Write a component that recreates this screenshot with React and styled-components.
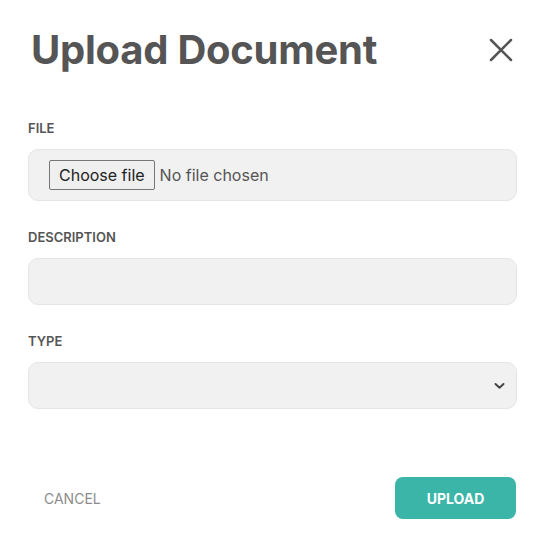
import React, { useState } from 'react';
import styled, { createGlobalStyle } from 'styled-components';

const GlobalStyle = createGlobalStyle`
  html, body {
    margin: 0;
    padding: 0;
    background: #ffffff;
  }
  body {
    font-family: Inter, "Noto Sans", sans-serif;
  }
`;

const Modal = styled.div`
  width: 543px;
  height: 542px;
  box-sizing: border-box;
  padding: 23px 26px 0 28px;
  display: flex;
  flex-direction: column;
`;

const Header = styled.div`
  display: flex;
  align-items: center;
  justify-content: space-between;
  margin-bottom: 43px;
`;

const Title = styled.h1`
  margin: 0 0 0 3px;
  font-size: 40px;
  font-weight: 700;
  color: #555555;
  line-height: 54px;
  letter-spacing: -0.25px;
`;

const CloseButton = styled.button`
  border: none;
  background: none;
  padding: 0;
  margin-right: 4px;
  width: 24px;
  height: 24px;
  display: flex;
  align-items: center;
  justify-content: center;
  cursor: pointer;
`;

const Field = styled.div`
  display: flex;
  flex-direction: column;
  margin-bottom: ${(p) => p.$gap}px;
`;

const Label = styled.label`
  font-size: 13px;
  font-weight: 600;
  color: #555555;
  text-transform: uppercase;
  line-height: 16px;
  margin-bottom: 13px;
`;

const Box = styled.div`
  box-sizing: border-box;
  height: ${(p) => p.$h}px;
  background: #f1f1f1;
  border: 1px solid #e5e5e5;
  border-radius: 10px;
  display: flex;
  align-items: center;
  gap: 5px;
  padding: 0 20px;
  position: relative;
`;

const HiddenInput = styled.input`
  display: none;
`;

const PickButton = styled.label`
  box-sizing: border-box;
  height: 30px;
  display: flex;
  align-items: center;
  padding: 0 9px;
  background: #efefef;
  border: 1px solid #767676;
  border-radius: 2px;
  font-size: 16px;
  color: #222222;
  cursor: pointer;
`;

const FileName = styled.span`
  font-size: 16px;
  color: #555555;
`;

const Select = styled.select`
  appearance: none;
  -webkit-appearance: none;
  border: none;
  background: transparent;
  width: 100%;
  height: 100%;
  outline: none;
  font-family: Inter, "Noto Sans", sans-serif;
  font-size: 16px;
`;

const Chevron = styled.svg`
  position: absolute;
  right: 11px;
  top: 50%;
  transform: translateY(-50%);
  pointer-events: none;
`;

const Footer = styled.div`
  display: flex;
  justify-content: space-between;
  align-items: center;
  margin-top: 68px;
`;

const CancelButton = styled.button`
  border: none;
  background: none;
  padding: 0 0 0 16px;
  font-family: Inter, "Noto Sans", sans-serif;
  font-size: 14px;
  color: #8c8c8c;
  cursor: pointer;
`;

const UploadButton = styled.button`
  width: 121px;
  height: 42px;
  margin-right: 1px;
  border: none;
  border-radius: 8px;
  background: #3ab5a8;
  color: #ffffff;
  font-family: Inter, "Noto Sans", sans-serif;
  font-size: 14px;
  font-weight: 700;
  cursor: pointer;
`;

const App = () => {
  const [fileName, setFileName] = useState('');

  return (
    <>
      <GlobalStyle />
      <Modal>
        <Header>
          <Title>Upload Document</Title>
          <CloseButton aria-label="Close">
            <svg width="24" height="24" viewBox="0 0 24 24">
              <path d="M2 2 L22 22 M22 2 L2 22" stroke="#555555" strokeWidth="2.5" strokeLinecap="round" />
            </svg>
          </CloseButton>
        </Header>

        <Field $gap={28}>
          <Label>File</Label>
          <Box $h={52}>
            <PickButton>
              Choose file
              <HiddenInput
                type="file"
                onChange={(e) => setFileName(e.target.files[0] ? e.target.files[0].name : '')}
              />
            </PickButton>
            <FileName>{fileName || 'No file chosen'}</FileName>
          </Box>
        </Field>

        <Field $gap={28}>
          <Label>Description</Label>
          <Box $h={47} />
        </Field>

        <Field $gap={0}>
          <Label>Type</Label>
          <Box $h={47}>
            <Select defaultValue="">
              <option value=""></option>
            </Select>
            <Chevron width="11" height="7" viewBox="0 0 11 7">
              <path d="M1.5 1.5 L5.5 5.2 L9.5 1.5" stroke="#444444" strokeWidth="2" fill="none" strokeLinecap="round" strokeLinejoin="round" />
            </Chevron>
          </Box>
        </Field>

        <Footer>
          <CancelButton>CANCEL</CancelButton>
          <UploadButton>UPLOAD</UploadButton>
        </Footer>
      </Modal>
    </>
  );
};

export default App;
